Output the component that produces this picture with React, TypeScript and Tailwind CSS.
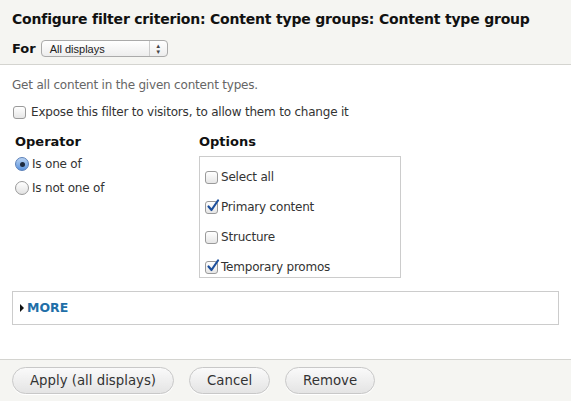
import React from 'react';

const font = { fontFamily: '"DejaVu Sans", "Liberation Sans", sans-serif' };

function Checkbox({ checked }: { checked?: boolean }) {
  return (
    <span className="relative inline-flex h-[13px] w-[13px] shrink-0 rounded-[3px] border border-[#9a9a9a] bg-gradient-to-b from-white to-[#e6e6e6]">
      {checked && (
        <svg className="absolute -top-[3px] left-[0px]" width="14" height="14" viewBox="0 0 14 14">
          <path d="M2.5 7.5 L5.5 11 L12 1.5" fill="none" stroke="#1d4f9c" strokeWidth="2.2" strokeLinecap="round" strokeLinejoin="round" />
        </svg>
      )}
    </span>
  );
}

function Radio({ checked }: { checked?: boolean }) {
  return (
    <span
      className={
        checked
          ? 'inline-flex h-[14px] w-[14px] shrink-0 items-center justify-center rounded-full border border-[#5a7fb8] bg-gradient-to-b from-[#b9d3f2] to-[#5b93dd]'
          : 'inline-flex h-[14px] w-[14px] shrink-0 rounded-full border border-[#9a9a9a] bg-gradient-to-b from-white to-[#e2e2e2]'
      }
    >
      {checked && <span className="h-[5px] w-[5px] rounded-full bg-[#1c2a3e]" />}
    </span>
  );
}

function Button({ children }: { children: React.ReactNode }) {
  return (
    <button className="h-[27px] rounded-full border border-[#c8c8c8] bg-gradient-to-b from-[#fafafa] to-[#e4e4e4] px-[17px] text-[13.3px] text-[#333] shadow-[0_1px_0_#fff]">
      {children}
    </button>
  );
}

export default function App() {
  const options = [
    { label: 'Select all', checked: false },
    { label: 'Primary content', checked: true },
    { label: 'Structure', checked: false },
    { label: 'Temporary promos', checked: true },
  ];

  return (
    <div className="flex h-[401px] w-[571px] flex-col bg-white text-[#333]" style={font}>
      <div className="h-[65px] border-b border-[#d4d4d0] bg-[#f5f5f2] px-[12px] pt-[9px]">
        <h1 className="whitespace-nowrap text-[14px] font-bold leading-[20px] tracking-[-0.2px] text-[#111]">
          Configure filter criterion: Content type groups: Content type group
        </h1>
        <div className="mt-[10px] flex items-center gap-[5px]">
          <span className="text-[13px] font-bold text-[#111]">For</span>
          <div className="relative flex h-[17px] w-[127px] items-center rounded-[4px] border border-[#aaa] bg-gradient-to-b from-white to-[#ededed] pl-[8px] text-[11px] text-[#222]" style={{ fontFamily: '"Liberation Sans", Arial, sans-serif' }}>
            All displays
            <span className="absolute right-0 top-0 flex h-full w-[18px] flex-col items-center justify-center border-l border-[#ccc] text-[6px] leading-[6px] text-[#444]">
              <span>▲</span>
              <span>▼</span>
            </span>
          </div>
        </div>
      </div>

      <div className="flex-1 px-[12px] pt-[12px]">
        <p className="text-[12px] leading-[16px] tracking-[-0.2px] text-[#666]">Get all content in the given content types.</p>
        <label className="mt-[11px] flex h-[16px] items-center gap-[5px] pl-[1px] text-[12px] tracking-[-0.2px] text-[#333]">
          <Checkbox />
          Expose this filter to visitors, to allow them to change it
        </label>

        <div className="mt-[14px] flex">
          <div className="w-[187px] pl-[3px]">
            <div className="text-[13px] font-bold leading-[16px] text-[#111]">Operator</div>
            <div className="mt-[6px] flex flex-col gap-[8px]">
              <label className="flex h-[16px] items-center gap-[3px] text-[12px] tracking-[-0.2px] text-[#333]">
                <Radio checked />
                Is one of
              </label>
              <label className="flex h-[16px] items-center gap-[3px] text-[12px] tracking-[-0.2px] text-[#333]">
                <Radio />
                Is not one of
              </label>
            </div>
          </div>
          <div>
            <div className="text-[13px] font-bold leading-[16px] text-[#111]">Options</div>
            <div className="mt-[6px] flex h-[122px] w-[202px] flex-col gap-[14px] border border-[#ccc] px-[5px] pt-[12px]">
              {options.map((o) => (
                <label key={o.label} className="flex h-[16px] items-center gap-[3px] text-[12px] tracking-[-0.2px] text-[#333]">
                  <Checkbox checked={o.checked} />
                  {o.label}
                </label>
              ))}
            </div>
          </div>
        </div>

        <div className="mt-[13px] flex h-[34px] items-center border border-[#ccc] pl-[7px]">
          <span className="mr-[3px] h-0 w-0 border-y-[4px] border-l-[4px] border-y-transparent border-l-[#111]" />
          <span className="text-[12.5px] font-bold text-[#1f6fa8]">MORE</span>
        </div>
      </div>

      <div className="flex h-[42px] items-center gap-[15px] border-t border-[#d4d4d0] bg-[#f5f5f2] px-[12px]">
        <Button>Apply (all displays)</Button>
        <Button>Cancel</Button>
        <Button>Remove</Button>
      </div>
    </div>
  );
}
